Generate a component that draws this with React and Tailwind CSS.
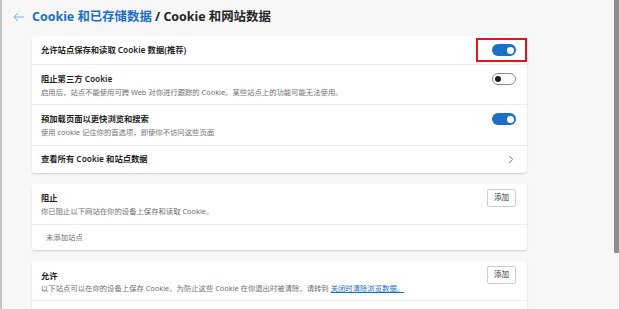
import React from "react";

const font = { fontFamily: '"Noto Sans", "Noto Sans CJK SC", sans-serif' };

const Toggle = ({ on }) =>
  on ? (
    <div className="w-[24px] h-[12px] rounded-full bg-[#1a6fc6] flex items-center justify-end pr-[2px]">
      <div className="w-[7px] h-[7px] rounded-full bg-white"></div>
    </div>
  ) : (
    <div className="w-[24px] h-[12px] rounded-full bg-white border border-[#8a8a8a] flex items-center pl-[2px]">
      <div className="w-[6px] h-[6px] rounded-full bg-[#1f1f1f]"></div>
    </div>
  );

const AddButton = () => (
  <div className="w-[29px] h-[18px] border border-[#cfcfcf] rounded-[2px] bg-white flex items-center justify-center text-[7.5px] text-[#333]">
    添加
  </div>
);

export default function App() {
  return (
    <div
      className="w-[620px] h-[309px] overflow-hidden bg-[#f7f7f7] flex border-l-2 border-[#c4c4c4]"
      style={font}
    >
      <div className="flex-1 pl-[10px]">
        {/* Header */}
        <div className="h-[36px] flex items-center pb-[2px]">
          <svg width="20" height="12" viewBox="0 0 20 12" className="shrink-0">
            <path d="M12 6H2M6 2L2 6l4 4" fill="none" stroke="#7aaee0" strokeWidth="1" />
          </svg>
          <div className="text-[12.4px] font-bold text-[#262626]">
            <span className="text-[#1a6fc6]">Cookie 和已存储数据</span> / Cookie 和网站数据
          </div>
        </div>

        {/* Main cookie card */}
        <div className="ml-[20px] w-[495px] bg-white rounded-[3px] shadow-[0_1px_2px_rgba(0,0,0,0.16)]">
          <div className="relative h-[28px] flex items-center justify-between pl-[9px] pr-[11px]">
            <div className="text-[8.3px] font-semibold text-[#1f1f1f]">允许站点保存和读取 Cookie 数据(推荐)</div>
            <Toggle on />
            <div className="absolute top-[2px] right-0 w-[51px] h-[24px] border-2 border-[#e3141c]"></div>
          </div>
          <div className="h-[40px] border-t border-[#ececec] flex items-center justify-between pl-[9px] pr-[11px]">
            <div className="flex flex-col gap-[3px]">
              <div className="text-[8.3px] font-semibold text-[#1f1f1f] leading-[11px]">阻止第三方 Cookie</div>
              <div className="text-[7.35px] text-[#707070] leading-[10px]">
                启用后，站点不能使用可跨 Web 对你进行跟踪的 Cookie。某些站点上的功能可能无法使用。
              </div>
            </div>
            <div className="self-start mt-[8px]">
              <Toggle />
            </div>
          </div>
          <div className="h-[41px] border-t border-[#ececec] flex items-center justify-between pl-[9px] pr-[11px]">
            <div className="flex flex-col gap-[3px]">
              <div className="text-[8.3px] font-semibold text-[#1f1f1f] leading-[11px]">预加载页面以更快浏览和搜索</div>
              <div className="text-[7.35px] text-[#707070] leading-[10px]">
                使用 cookie 记住你的首选项，即使你不访问这些页面
              </div>
            </div>
            <div className="self-start mt-[8px]">
              <Toggle on />
            </div>
          </div>
          <div className="h-[28px] border-t border-[#ececec] flex items-center justify-between pl-[9px] pr-[13px]">
            <div className="text-[8.3px] font-semibold text-[#1f1f1f]">查看所有 Cookie 和站点数据</div>
            <svg width="6" height="9" viewBox="0 0 6 9">
              <path d="M1.5 1l3 3.5-3 3.5" fill="none" stroke="#6b6b6b" strokeWidth="0.9" />
            </svg>
          </div>
        </div>

        {/* Block card */}
        <div className="ml-[20px] mt-[11px] w-[495px] bg-white rounded-[3px] shadow-[0_1px_2px_rgba(0,0,0,0.16)]">
          <div className="h-[40px] flex justify-between pl-[9px] pr-[11px] pt-[5px]">
            <div className="flex flex-col gap-[3px] pt-[3px]">
              <div className="text-[8.3px] font-semibold text-[#1f1f1f] leading-[11px]">阻止</div>
              <div className="text-[7.35px] text-[#707070] leading-[10px]">你已阻止以下网站在你的设备上保存和读取 Cookie。</div>
            </div>
            <AddButton />
          </div>
          <div className="h-[26px] border-t border-[#ececec] flex items-center pl-[14px]">
            <div className="text-[7.35px] text-[#707070]">未添加站点</div>
          </div>
        </div>

        {/* Allow card */}
        <div className="ml-[20px] mt-[11px] w-[495px] bg-white rounded-[3px] shadow-[0_1px_2px_rgba(0,0,0,0.16)]">
          <div className="h-[39px] flex justify-between pl-[9px] pr-[11px] pt-[5px]">
            <div className="flex flex-col gap-[2px] pt-[4px]">
              <div className="text-[8.3px] font-semibold text-[#1f1f1f] leading-[11px]">允许</div>
              <div className="text-[7.35px] text-[#707070] leading-[10px]">
                以下站点可以在你的设备上保存 Cookie。为防止这些 Cookie 在你退出时被清除，请转到{" "}
                <span className="text-[#1a6fc6] underline">关闭时清除浏览数据。</span>
              </div>
            </div>
            <AddButton />
          </div>
          <div className="h-[26px] border-t border-[#ececec]"></div>
        </div>
      </div>

      {/* Scrollbar */}
      <div className="w-[7px] h-full flex bg-[#f7f7f7]">
        <div className="w-[5px] h-[253px] ml-[1px] bg-[#8d8d8d] rounded-b-[1px]"></div>
        <div className="w-[1px] h-full bg-[#d0d0d0]"></div>
      </div>
    </div>
  );
}
